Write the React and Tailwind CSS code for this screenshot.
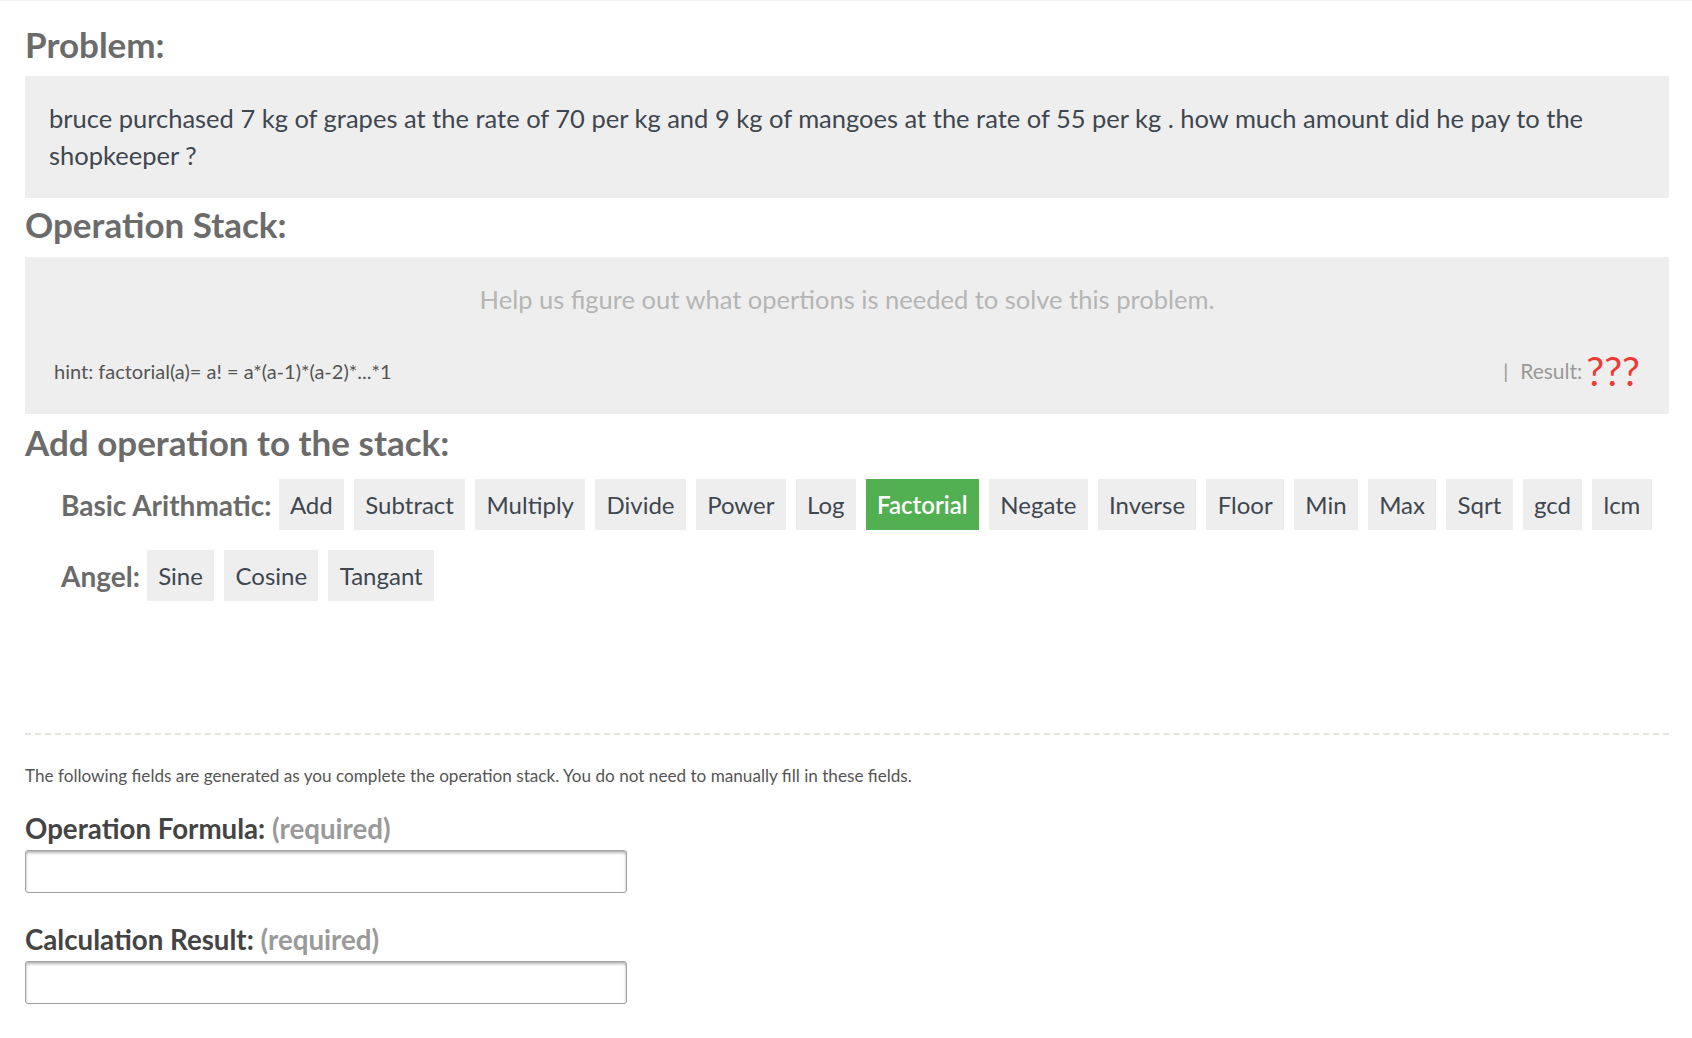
const basicOps = [
  "Add",
  "Subtract",
  "Multiply",
  "Divide",
  "Power",
  "Log",
  "Factorial",
  "Negate",
  "Inverse",
  "Floor",
  "Min",
  "Max",
  "Sqrt",
  "gcd",
  "lcm",
];

const angleOps = ["Sine", "Cosine", "Tangant"];

function OpButton({ label, active }) {
  return (
    <button
      type="button"
      className={`h-[51px] shrink-0 whitespace-nowrap px-[11.3px] text-[24px] leading-none ${
        active
          ? "bg-[#52b052] font-semibold text-white"
          : "bg-[#eeeeee] text-[#3e4650]"
      }`}
    >
      {label}
    </button>
  );
}

function SectionTitle({ children, className = "mt-[6px]" }) {
  return (
    <h2
      className={`${className} mb-[12px] text-[35px] font-bold leading-[41px] text-[#6b6b6b]`}
    >
      {children}
    </h2>
  );
}

export default function App() {
  return (
    <div
      className="min-h-screen border-t border-[#f0f0f0] bg-white pl-[25px] pr-[23px] pt-[17px] pb-10"
      style={{ fontFamily: "Lato, 'Open Sans', sans-serif" }}
    >
      <SectionTitle>Problem:</SectionTitle>
      <div className="-mt-px bg-[#eeeeee] px-6 py-6 text-[25.5px] leading-[37px] text-[#3e4650]">
        bruce purchased 7 kg of grapes at the rate of 70 per kg and 9 kg of
        mangoes at the rate of 55 per kg . how much amount did he pay to the
        shopkeeper ?
      </div>

      <SectionTitle>Operation Stack:</SectionTitle>
      <div className="bg-[#eeeeee] px-[29px] pt-6 pb-[23px]">
        <p className="text-center text-[25.5px] leading-[36px] text-[#b5b5b5]">
          Help us figure out what opertions is needed to solve this problem.
        </p>
        <div className="mt-[34px] flex h-10 items-center justify-between">
          <span className="text-[20px] text-[#555555]">
            hint: factorial(a)= a! = a*(a-1)*(a-2)*...*1
          </span>
          <span className="flex items-center">
            <span className="mr-[12px] text-[20px] text-[#999999]">|</span>
            <span className="mr-1 text-[21px] text-[#999999]">Result:</span>
            <span className="text-[40px] leading-none text-[#ee3a35]">???</span>
          </span>
        </div>
      </div>

      <SectionTitle className="mt-[8px]">Add operation to the stack:</SectionTitle>
      <div className="flex flex-col gap-5 pl-[36px] pt-1">
        <div className="flex items-center gap-[10px]">
          <span className="mr-[-3px] shrink-0 whitespace-nowrap text-[28px] font-bold text-[#6b6b6b]">
            Basic Arithmatic:
          </span>
          {basicOps.map((op) => (
            <OpButton key={op} label={op} active={op === "Factorial"} />
          ))}
        </div>
        <div className="flex items-center gap-[10px]">
          <span className="mr-[-3px] shrink-0 whitespace-nowrap text-[28px] font-bold text-[#6b6b6b]">
            Angel:
          </span>
          {angleOps.map((op) => (
            <OpButton key={op} label={op} />
          ))}
        </div>
      </div>

      <div className="mt-[132px] border-t-2 border-dashed border-[#e6e4dc]" />

      <p className="mt-[28px] text-[17.15px] text-[#555555]">
        The following fields are generated as you complete the operation stack.
        You do not need to manually fill in these fields.
      </p>

      <label className="mt-[22px] block text-[27.7px] font-bold leading-[36px] text-[#444444]">
        Operation Formula: <span className="text-[#9a9a9a]">(required)</span>
      </label>
      <input
        type="text"
        className="mt-[3px] block h-[43px] w-[602px] rounded-[3px] border border-[#a0a0a0] shadow-[inset_0_2px_3px_rgba(0,0,0,0.3)] outline-none"
      />

      <label className="mt-[29px] block text-[27.7px] font-bold leading-[36px] text-[#444444]">
        Calculation Result: <span className="text-[#9a9a9a]">(required)</span>
      </label>
      <input
        type="text"
        className="mt-[3px] block h-[43px] w-[602px] rounded-[3px] border border-[#a0a0a0] shadow-[inset_0_2px_3px_rgba(0,0,0,0.3)] outline-none"
      />
    </div>
  );
}
